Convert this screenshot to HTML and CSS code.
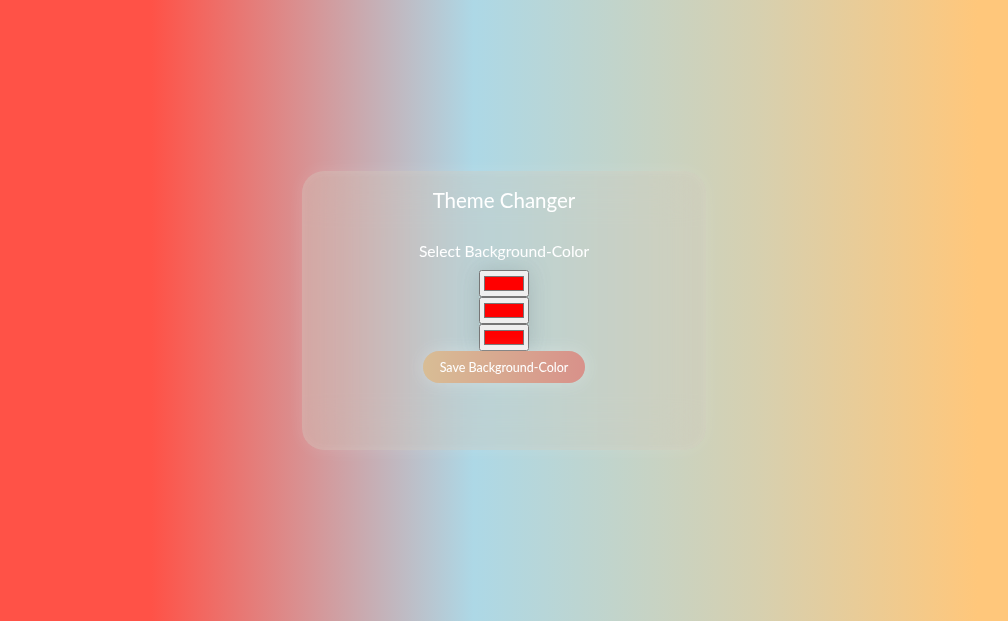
FILE: index.html
```html
<!DOCTYPE html>
<html lang="en">
<head>
<meta charset="utf-8">
<title>Theme Changer</title>
<link rel="stylesheet" href="styles.css">
</head>
<body>
<main class="page">
  <section class="card">
    <h1 class="title">Theme Changer</h1>
    <h2 class="label">Select Background-Color</h2>
    <div class="pickers">
      <input class="picker" type="color" value="#ff0000">
      <input class="picker" type="color" value="#ff0000">
      <input class="picker" type="color" value="#ff0000">
    </div>
    <button class="save" type="button">Save Background-Color</button>
  </section>
</main>
</body>
</html>
```

FILE: styles.css
```css
* { box-sizing: border-box; }
html, body { margin: 0; height: 100%; }
body {
  font-family: "Lato", "Open Sans", sans-serif;
  background: linear-gradient(to right, #ff5247 15%, #add8e6 47%, #d6d0b0 75%, #ffc77b 97%);
}
.page {
  height: 100vh;
  display: flex;
  align-items: center;
  justify-content: center;
}
.card {
  width: 404px;
  height: 279px;
  border-radius: 22px;
  padding-top: 17px;
  display: flex;
  flex-direction: column;
  align-items: center;
  background: rgba(212, 202, 188, 0.34);
  backdrop-filter: blur(24px);
  box-shadow: inset 0 0 10px rgba(255, 255, 255, 0.08), 0 0 18px rgba(255, 255, 255, 0.1);
}
.title {
  margin: 0;
  font-size: 20.5px;
  line-height: 24px;
  font-weight: 400;
  color: #ffffff;
}
.label {
  margin: 29px 0 9px;
  font-size: 15.6px;
  line-height: 20px;
  font-weight: 400;
  color: #ffffff;
}
.pickers {
  display: flex;
  flex-direction: column;
  box-shadow: 0 0 22px rgba(80, 90, 90, 0.22);
}
.picker {
  display: block;
  margin: 0;
  width: 50px;
  height: 27px;
}
.save {
  width: 162px;
  height: 32px;
  border: none;
  border-radius: 16px;
  font-family: inherit;
  font-size: 12.5px;
  color: #ffffff;
  background: linear-gradient(to right, #d8bd95, #d8918a);
  box-shadow: 0 0 16px rgba(255, 255, 255, 0.25);
}
```
